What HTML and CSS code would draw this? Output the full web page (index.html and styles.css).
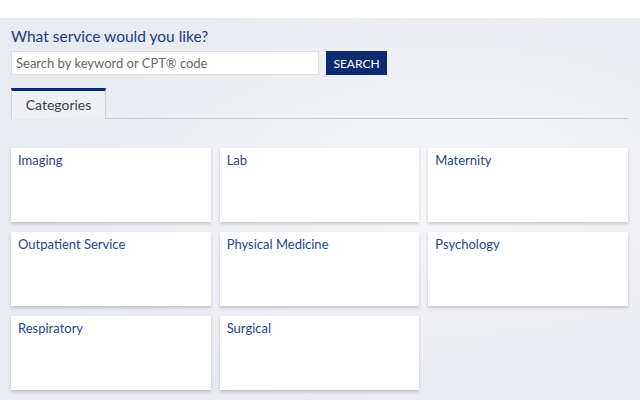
FILE: index.html
```html
<!DOCTYPE html>
<html>
<head>
<meta charset="utf-8">
<link rel="stylesheet" href="styles.css">
</head>
<body>
<div class="panel">
  <h1 class="title">What service would you like?</h1>
  <div class="search">
    <input class="search-input" type="text" placeholder="Search by keyword or CPT® code">
    <button class="search-btn">SEARCH</button>
  </div>
  <div class="tabs">
    <div class="tab">Categories</div>
  </div>
  <div class="grid">
    <div class="card">Imaging</div>
    <div class="card">Lab</div>
    <div class="card">Maternity</div>
    <div class="card">Outpatient Service</div>
    <div class="card">Physical Medicine</div>
    <div class="card">Psychology</div>
    <div class="card">Respiratory</div>
    <div class="card">Surgical</div>
  </div>
</div>
</body>
</html>
```
FILE: styles.css
```css
* { box-sizing: border-box; }
html, body { margin: 0; padding: 0; background: #fff; }
body { font-family: Lato, "Open Sans", sans-serif; }
.panel {
  margin-top: 18px;
  height: 382px;
  padding: 8px 12px 0 11px;
  background: radial-gradient(ellipse 70% 60% at 70% 45%, #f6f7f9 0%, #eceef3 70%, #e7eaf1 100%);
}
.title {
  margin: 0;
  font-size: 15.5px;
  font-weight: 400;
  line-height: 21px;
  color: #1b3a80;
}
.search {
  display: flex;
  gap: 7px;
  margin-top: 4px;
}
.search-input {
  width: 308px;
  height: 24px;
  border: 1px solid #dcdde0;
  background: #fff;
  padding: 0 4px;
  font-family: inherit;
  font-size: 13px;
  color: #555;
  outline: none;
}
.search-input::placeholder { color: #666; }
.search-btn {
  width: 61px;
  height: 24px;
  border: 0;
  background: #0b2a6f;
  color: #fff;
  font-family: inherit;
  font-size: 12px;
  padding: 0;
}
.tabs {
  display: flex;
  margin-top: 13px;
  border-bottom: 1px solid #c9ccd2;
}
.tab {
  width: 95px;
  height: 31px;
  border-top: 3px solid #0b2a6f;
  border-left: 1px solid #cfd1d6;
  border-right: 1px solid #cfd1d6;
  margin-bottom: -1px;
  background: #eef0f4;
  color: #3a3f4a;
  font-size: 14px;
  text-align: center;
  line-height: 27px;
}
.grid {
  display: grid;
  grid-template-columns: repeat(3, 1fr);
  column-gap: 9px;
  row-gap: 10px;
  margin-top: 29px;
}
.card {
  height: 74px;
  background: #fff;
  box-shadow: 0 2px 3px rgba(0,0,0,0.18);
  padding: 4px 7px;
  font-size: 13px;
  line-height: 16px;
  color: #24478a;
}
```
